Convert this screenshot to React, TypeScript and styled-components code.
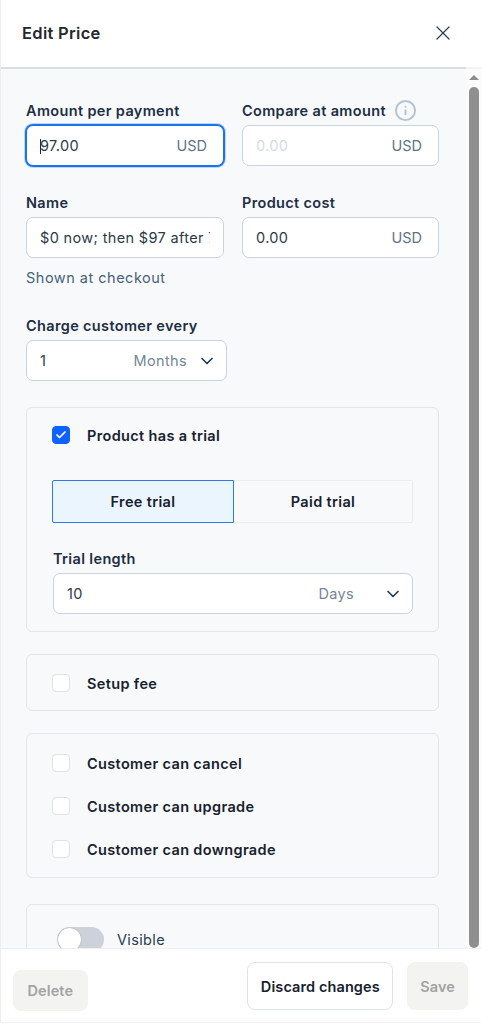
import React from 'react';
import styled, { createGlobalStyle } from 'styled-components';
import { X, ChevronDown, Check, Info } from 'lucide-react';

const GlobalStyle = createGlobalStyle`
  html, body {
    margin: 0;
    padding: 0;
    background: #fff;
  }
  * {
    box-sizing: border-box;
  }
`;

const Drawer = styled.div`
  width: 481px;
  height: 1023px;
  display: flex;
  flex-direction: column;
  overflow: hidden;
  background: #fff;
  border-left: 1px solid #eceef0;
  border-bottom: 1px solid #f2f3f4;
  font-family: 'Inter', 'Noto Sans', sans-serif;
  letter-spacing: 0.35px;
  color: #1c2b3a;
`;

const Header = styled.header`
  height: 69px;
  flex: none;
  display: flex;
  align-items: center;
  justify-content: space-between;
  padding: 0 25px 1px 21px;
  background: #fff;
  border-bottom: 2px solid;
  border-image: linear-gradient(to right, #d8dfe5 464px, #f3f3f3 464px) 1;
  z-index: 1;
`;

const Title = styled.h1`
  margin: 0;
  font-size: 16.5px;
  font-weight: 600;
  letter-spacing: 0.3px;
  color: #22282e;
`;

const Middle = styled.div`
  flex: 1;
  min-height: 0;
  display: flex;
  background: #f8f9fb;
`;

const Content = styled.main`
  flex: 1;
  min-width: 0;
  overflow: hidden;
  padding: 29px 0 0 25px;
`;

const ScrollTrack = styled.div`
  width: 15px;
  flex: none;
  display: flex;
  flex-direction: column;
  align-items: center;
  padding-top: 6px;
  background: #fbfbfb;
`;

const ScrollArrow = styled.div`
  width: 0;
  height: 0;
  border-left: 5px solid transparent;
  border-right: 5px solid transparent;
  border-bottom: 5px solid #8c8c8c;
`;

const ScrollThumb = styled.div`
  width: 10px;
  flex: 1;
  margin-top: 7px;
  border-radius: 5px;
  background: #8f8f8f;
`;

const FieldGrid = styled.div`
  display: grid;
  grid-template-columns: 198px 197px;
  column-gap: 18px;
  row-gap: 24px;
  width: 413px;
`;

const Field = styled.div`
  display: flex;
  flex-direction: column;
`;

const Label = styled.label`
  display: flex;
  align-items: center;
  gap: 8px;
  height: 24px;
  margin-bottom: 3px;
  font-size: 14.5px;
  font-weight: 600;
  color: #1d2f44;
  white-space: nowrap;
`;

const InfoMark = styled(Info)`
  width: 23px;
  height: 23px;
  color: #b4c3d0;
`;

const InputBox = styled.div<{ $focused?: boolean; $width?: number; $padRight?: number }>`
  height: 41px;
  width: ${p => (p.$width ? `${p.$width}px` : '100%')};
  display: flex;
  align-items: center;
  justify-content: space-between;
  padding: 0 ${p => p.$padRight ?? 16}px 0 13px;
  background: #fff;
  border: 1px solid ${p => (p.$focused ? '#1a73e8' : '#c9d3dc')};
  border-radius: 7px;
  box-shadow: ${p => (p.$focused ? '0 0 0 1px #1a73e8, 0 0 0 2px #bcd6f8' : 'none')};
  font-size: 14.5px;
  color: #2c3a48;
  white-space: nowrap;
`;

const Value = styled.span<{ $muted?: boolean }>`
  min-width: 0;
  overflow: hidden;
  color: ${p => (p.$muted ? '#d3dce4' : '#2c3a48')};
`;

const Caret = styled.span`
  display: inline-block;
  width: 1px;
  height: 15px;
  margin-right: -1px;
  vertical-align: -3px;
  background: #1c2b3a;
`;

const Unit = styled.span`
  letter-spacing: 0;
  color: #5d7387;
`;

const Hint = styled.div`
  margin-top: 11px;
  font-size: 14.5px;
  letter-spacing: 0.5px;
  color: #46627a;
`;

const ChargeField = styled(Field)`
  margin-top: 27px;
`;

const SelectRight = styled.span<{ $gap: number }>`
  display: flex;
  align-items: center;
  gap: ${p => p.$gap}px;
  color: #748698;
`;

const Chevron = styled(ChevronDown)`
  width: 20px;
  height: 20px;
  color: #1f3a56;
  stroke-width: 2;
`;

const Section = styled.section<{ $top: number; $padding: string; $gap?: number }>`
  width: 413px;
  margin-top: ${p => p.$top}px;
  display: flex;
  flex-direction: column;
  gap: ${p => p.$gap ?? 0}px;
  padding: ${p => p.$padding};
  border: 1px solid #e1e6eb;
  border-radius: 6px;
`;

const CheckRow = styled.div`
  display: flex;
  align-items: center;
  gap: 17px;
  height: 18px;
  font-size: 14.5px;
  font-weight: 600;
  color: #17222e;
`;

const Box = styled.span<{ $checked?: boolean }>`
  width: 18px;
  height: 18px;
  flex: none;
  margin-left: -1px;
  display: flex;
  align-items: center;
  justify-content: center;
  border-radius: 4px;
  background: ${p => (p.$checked ? '#0f62fe' : '#fff')};
  border: 1px solid ${p => (p.$checked ? '#0f62fe' : '#dde3e8')};
  color: #fff;
`;

const Segments = styled.div`
  width: 361px;
  height: 43px;
  margin: 36px 0 0 -1px;
  display: flex;
`;

const Segment = styled.div<{ $active?: boolean }>`
  flex: ${p => (p.$active ? '0 0 182px' : '1')};
  display: flex;
  align-items: center;
  justify-content: center;
  font-size: 14.5px;
  font-weight: 600;
  color: #17222e;
  background: ${p => (p.$active ? '#ebf5fe' : 'transparent')};
  border: 1px solid ${p => (p.$active ? '#2f7be5' : '#eaecee')};
  border-left-width: ${p => (p.$active ? '1px' : '0')};
  border-radius: ${p => (p.$active ? '2px 0 0 2px' : '0 2px 2px 0')};
`;

const TrialField = styled(Field)`
  margin-top: 23px;
`;

const ToggleRow = styled.div`
  display: flex;
  align-items: center;
  gap: 13px;
  font-size: 14.5px;
  color: #2c3e50;
`;

const Toggle = styled.span`
  width: 47px;
  height: 25px;
  flex: none;
  padding: 1px;
  display: flex;
  border-radius: 13px;
  background: #cdd2da;
`;

const Knob = styled.span`
  width: 23px;
  height: 23px;
  border-radius: 50%;
  background: #fff;
  box-shadow: 0 0 1px rgba(0, 0, 0, 0.4);
`;

const Footer = styled.footer`
  height: 74px;
  flex: none;
  display: flex;
  justify-content: space-between;
  padding: 13px 13px 0 12px;
  background: #fff;
  border-top: 1px solid #eceef0;
  z-index: 1;
`;

const FooterRight = styled.div`
  display: flex;
  gap: 14px;
`;

const Button = styled.button<{ $tall?: boolean; $offset?: number; $outlined?: boolean; $padX?: number }>`
  height: ${p => (p.$tall ? 48 : 41)}px;
  margin-top: ${p => p.$offset ?? 0}px;
  padding: 0 ${p => p.$padX ?? 12}px;
  font-family: inherit;
  font-size: 14.5px;
  font-weight: 600;
  letter-spacing: 0.1px;
  border-radius: 8px;
  color: ${p => (p.$outlined ? '#17222e' : '#a3a3a3')};
  background: ${p => (p.$outlined ? '#fff' : '#f3f3f2')};
  border: 1px solid ${p => (p.$outlined ? '#dfe3e7' : '#f3f3f2')};
`;

const CloseIcon = styled(X)`
  width: 24px;
  height: 24px;
  margin-right: 1px;
  color: #2c4258;
`;

export default function App() {
  return (
    <>
      <GlobalStyle />
      <Drawer>
        <Header>
          <Title>Edit Price</Title>
          <CloseIcon strokeWidth={1.3} />
        </Header>
        <Middle>
          <Content>
            <FieldGrid>
              <Field>
                <Label>Amount per payment</Label>
                <InputBox $focused>
                  <Value><Caret />97.00</Value>
                  <Unit>USD</Unit>
                </InputBox>
              </Field>
              <Field>
                <Label>Compare at amount <InfoMark /></Label>
                <InputBox>
                  <Value $muted>0.00</Value>
                  <Unit>USD</Unit>
                </InputBox>
              </Field>
              <Field>
                <Label>Name</Label>
                <InputBox $padRight={13}>
                  <Value>$0 now; then $97 after 7 days</Value>
                </InputBox>
                <Hint>Shown at checkout</Hint>
              </Field>
              <Field>
                <Label>Product cost</Label>
                <InputBox>
                  <Value>0.00</Value>
                  <Unit>USD</Unit>
                </InputBox>
              </Field>
            </FieldGrid>
            <ChargeField>
              <Label>Charge customer every</Label>
              <InputBox $width={201} $padRight={9}>
                <Value>1</Value>
                <SelectRight $gap={10}>Months <Chevron /></SelectRight>
              </InputBox>
            </ChargeField>
            <Section $top={26} $padding="18px 25px 17px 26px">
              <CheckRow>
                <Box $checked><Check size={12} strokeWidth={3.5} /></Box>
                Product has a trial
              </CheckRow>
              <Segments>
                <Segment $active>Free trial</Segment>
                <Segment>Paid trial</Segment>
              </Segments>
              <TrialField>
                <Label>Trial length</Label>
                <InputBox $padRight={9}>
                  <Value>10</Value>
                  <SelectRight $gap={29}>Days <Chevron /></SelectRight>
                </InputBox>
              </TrialField>
            </Section>
            <Section $top={22} $padding="19px 25px 18px 26px">
              <CheckRow><Box />Setup fee</CheckRow>
            </Section>
            <Section $top={22} $padding="20px 25px 19px 26px" $gap={25}>
              <CheckRow><Box />Customer can cancel</CheckRow>
              <CheckRow><Box />Customer can upgrade</CheckRow>
              <CheckRow><Box />Customer can downgrade</CheckRow>
            </Section>
            <Section $top={26} $padding="22px 30px 40px 30px">
              <ToggleRow>
                <Toggle><Knob /></Toggle>
                Visible
              </ToggleRow>
            </Section>
          </Content>
          <ScrollTrack>
            <ScrollArrow />
            <ScrollThumb />
          </ScrollTrack>
        </Middle>
        <Footer>
          <Button $offset={8} $padX={13.5}>Delete</Button>
          <FooterRight>
            <Button $tall $outlined $padX={12.5}>Discard changes</Button>
            <Button $tall>Save</Button>
          </FooterRight>
        </Footer>
      </Drawer>
    </>
  );
}
